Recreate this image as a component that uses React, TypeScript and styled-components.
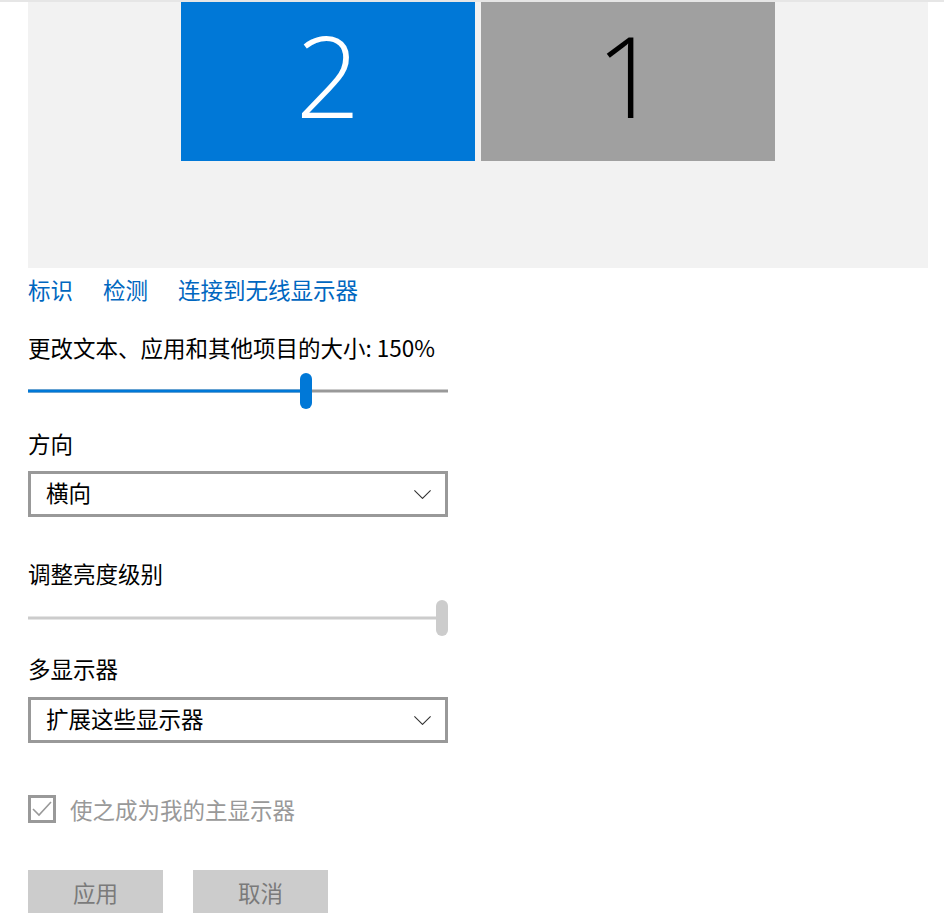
import React from 'react';
import styled, { createGlobalStyle } from 'styled-components';

const GlobalStyle = createGlobalStyle`
  html, body {
    margin: 0;
    padding: 0;
    background: #ffffff;
  }
  body {
    font-family: "Noto Sans CJK SC", "Noto Sans", sans-serif;
    color: #000000;
    overflow: hidden;
  }
`;

const Page = styled.div`
  width: 944px;
  height: 913px;
  border-top: 2px solid #e6e6e6;
  box-sizing: border-box;
  overflow: hidden;
`;

const Arrangement = styled.div`
  margin: 0 16px 0 28px;
  height: 266px;
  background: #f2f2f2;
  display: flex;
  justify-content: center;
  align-items: flex-start;
  gap: 6px;
`;

const Monitor = styled.div<{ $active?: boolean }>`
  width: 294px;
  height: 159px;
  background: ${p => (p.$active ? '#0078d7' : '#a0a0a0')};
  color: ${p => (p.$active ? '#ffffff' : '#000000')};
  display: flex;
  align-items: center;
  justify-content: center;
  padding-bottom: 16px;
  box-sizing: border-box;
`;

const Digit = styled.span`
  font-family: "Open Sans", "Lato", sans-serif;
  font-weight: 300;
  font-size: 113px;
  line-height: 136px;
`;

const Content = styled.div`
  padding-left: 28px;
  display: flex;
  flex-direction: column;
  align-items: flex-start;
`;

const Links = styled.div`
  display: flex;
  gap: 30px;
  margin-top: 6px;
`;

const Link = styled.a`
  color: #0067c0;
  font-size: 22.5px;
  line-height: 30px;
  text-decoration: none;
  cursor: pointer;
`;

const Label = styled.div<{ $top: number }>`
  font-size: 22.5px;
  line-height: 30px;
  margin-top: ${p => p.$top}px;
`;

const SliderBox = styled.div<{ $top: number }>`
  position: relative;
  width: 420px;
  height: 36px;
  margin-top: ${p => p.$top}px;
`;

const Track = styled.div<{ $color: string }>`
  position: absolute;
  left: 0;
  right: 0;
  top: 50%;
  height: 3px;
  transform: translateY(-50%);
  background: ${p => p.$color};
`;

const Fill = styled.div<{ $value: number }>`
  position: absolute;
  left: 0;
  top: 50%;
  height: 3px;
  transform: translateY(-50%);
  width: ${p => p.$value * 408}px;
  background: #0078d7;
`;

const Thumb = styled.div<{ $value: number; $color: string }>`
  position: absolute;
  top: 0;
  left: ${p => p.$value * 408}px;
  width: 12px;
  height: 36px;
  border-radius: 6px;
  background: ${p => p.$color};
`;

const Select = styled.div<{ $top: number }>`
  margin-top: ${p => p.$top}px;
  width: 420px;
  height: 46px;
  box-sizing: border-box;
  border: 3px solid #999999;
  display: flex;
  align-items: center;
  justify-content: space-between;
  padding: 0 14px 0 15px;
  background: #ffffff;
`;

const SelectText = styled.span`
  font-size: 22.5px;
  line-height: 30px;
  margin-bottom: 4px;
`;

const CheckRow = styled.div`
  margin-top: 52px;
  display: flex;
  align-items: center;
  gap: 14px;
  color: #999999;
  font-size: 22.5px;
  line-height: 28px;
`;

const CheckBox = styled.div`
  width: 28px;
  height: 28px;
  box-sizing: border-box;
  border: 3px solid #999999;
  display: flex;
  align-items: center;
  justify-content: center;
`;

const Buttons = styled.div`
  margin-top: 47px;
  display: flex;
  gap: 30px;
`;

const Button = styled.button`
  width: 135px;
  height: 48px;
  border: none;
  background: #cccccc;
  color: #7a7a7a;
  font-family: "Noto Sans CJK SC", "Noto Sans", sans-serif;
  font-size: 22.5px;
  line-height: 30px;
  padding: 0 0 4px 0;
`;

const Chevron = () => (
  <svg width="17" height="9" viewBox="0 0 17 9" fill="none">
    <path d="M0.4 0.4 L8.5 8.4 L16.6 0.4" stroke="#333333" strokeWidth="1.1" />
  </svg>
);

const Check = () => (
  <svg width="22" height="22" viewBox="0 0 22 22" fill="none">
    <path d="M2 11 L8 17 L20 4" stroke="#999999" strokeWidth="1.6" />
  </svg>
);

const Slider = ({ value, top, active }: { value: number; top: number; active: boolean }) => (
  <SliderBox $top={top}>
    <Track $color={active ? '#999999' : '#cccccc'} />
    {active && <Fill $value={value} />}
    <Thumb $value={value} $color={active ? '#0078d7' : '#cccccc'} />
  </SliderBox>
);

const App = () => {
  return (
    <React.Fragment>
      <GlobalStyle />
      <Page>
        <Arrangement>
          <Monitor $active><Digit>2</Digit></Monitor>
          <Monitor><Digit>1</Digit></Monitor>
        </Arrangement>
        <Content>
          <Links>
            <Link>标识</Link>
            <Link>检测</Link>
            <Link>连接到无线显示器</Link>
          </Links>
          <Label $top={28}>更改文本、应用和其他项目的大小: 150%</Label>
          <Slider value={0.667} top={11} active />
          <Label $top={19}>方向</Label>
          <Select $top={13}>
            <SelectText>横向</SelectText>
            <Chevron />
          </Select>
          <Label $top={41}>调整亮度级别</Label>
          <Slider value={1} top={12} active={false} />
          <Label $top={17}>多显示器</Label>
          <Select $top={14}>
            <SelectText>扩展这些显示器</SelectText>
            <Chevron />
          </Select>
          <CheckRow>
            <CheckBox>
              <Check />
            </CheckBox>
            <span>使之成为我的主显示器</span>
          </CheckRow>
          <Buttons>
            <Button>应用</Button>
            <Button>取消</Button>
          </Buttons>
        </Content>
      </Page>
    </React.Fragment>
  );
};

export default App;
